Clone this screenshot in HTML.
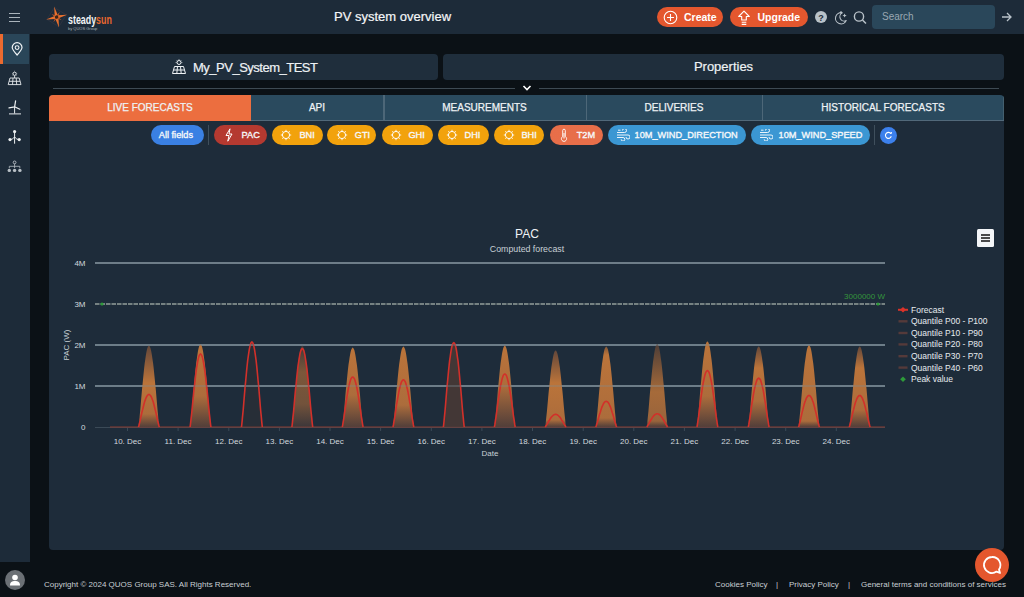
<!DOCTYPE html>
<html><head><meta charset="utf-8">
<style>
*{margin:0;padding:0;box-sizing:border-box}
html,body{width:1024px;height:597px;overflow:hidden;background:#0b1116;font-family:"Liberation Sans",sans-serif;color:#e9eef2}
.a{position:absolute}
#hdr{left:0;top:0;width:1024px;height:34px;background:#1d2b39}
#side{left:0;top:34px;width:30px;height:528px;background:#1d2b39}
#sideact{left:0;top:34px;width:29px;height:30px;background:#2a4659}
#sidebar-or{left:0;top:34px;width:3px;height:30px;background:#ec6a2f}
.panel{background:#1f2e3c;border-radius:4px;height:26px;top:54px;font-size:13px;line-height:26px;text-align:center;color:#eef2f5;-webkit-text-stroke:0.2px #eef2f5}
#sep{left:53px;top:88px;width:946px;height:1px;background:#3e4a53}
#chev{left:515px;top:83px;width:24px;height:10px;background:#0b1116}
#tabs{left:49px;top:95px;width:955px;height:26px;background:#2a4a5e;border-radius:4px 4px 0 0;overflow:hidden}
.tab{position:absolute;top:0;height:25px;line-height:25px;text-align:center;font-size:10px;color:#eef2f5;-webkit-text-stroke:0.25px #eef2f5}
.tdiv{position:absolute;top:0;width:1px;height:25px;background:#4d6778}
#tabline{position:absolute;left:0;top:25px;width:955px;height:1px;background:#52697a}
#content{left:49px;top:121px;width:955px;height:429px;background:#1e2c3a;border-radius:0 0 4px 4px}
.chip{position:absolute;top:125px;height:20px;border-radius:10px;font-size:9.2px;font-weight:normal;-webkit-text-stroke:0.35px #f6f8fa;line-height:20px;color:#f6f8fa;white-space:nowrap}
.chip span{position:absolute;top:0}
.btn{position:absolute;top:7px;height:20px;border-radius:10px;background:#e4572e;font-size:11px;line-height:20px;color:#fff}
.foot{position:absolute;top:579.5px;font-size:8px;color:#c9cfd4;white-space:nowrap}
.yl{position:absolute;font-size:8px;color:#d6dde2;text-align:right;width:30px}
.xl{position:absolute;top:436px;font-size:8px;color:#d6dde2;width:50px;text-align:center}
.lg{position:absolute;left:911px;font-size:8.5px;color:#e6ebef;white-space:nowrap;line-height:10px}
</style></head><body>
<div id="hdr" class="a"></div>
<!-- hamburger -->
<div class="a" style="left:9px;top:12.5px;width:11px;height:1px;background:#aab4bc"></div>
<div class="a" style="left:9px;top:16.5px;width:11px;height:1px;background:#aab4bc"></div>
<div class="a" style="left:9px;top:20.5px;width:11px;height:1px;background:#aab4bc"></div>
<!-- logo -->
<svg class="a" style="left:44px;top:4px" width="26" height="26" viewBox="0 0 26 26">
<g transform="translate(12.6 13.1) rotate(-13)">
<path d="M-7 -7 L7 -7 L7 7 L-7 7 Z" transform="rotate(45)" fill="none" stroke="#5a4a55" stroke-width="0.5" opacity="0.45"/>
<path d="M0 -10.8 L1.6 -1.6 L10.8 0 L1.6 1.6 L0 10.8 L-1.6 1.6 L-10.8 0 L-1.6 -1.6 Z" fill="#e8702e"/>
<path d="M0 -6 L0.9 -0.9 L6 0 L0.9 0.9 L0 6 L-0.9 0.9 L-6 0 L-0.9 -0.9 Z" transform="rotate(45)" fill="#c85a28"/>
<circle r="1.7" fill="#3a2418"/>
</g>
</svg>
<div class="a" style="left:67.5px;top:12.5px;font-size:12.5px;font-weight:bold;color:#f2f4f6;transform:scaleX(0.71);transform-origin:0 0;white-space:nowrap">steady<span style="color:#e8672e">sun</span></div>
<div class="a" style="left:68px;top:25.5px;font-size:4px;color:#a8b0b6;white-space:nowrap">by QUOS Group</div>
<div class="a" style="left:334px;top:9px;font-size:13px;color:#f4f6f8;width:118px;white-space:nowrap;-webkit-text-stroke:0.2px #f4f6f8">PV system overview</div>
<div class="btn" style="left:657px;width:66px"><svg class="a" style="left:6px;top:2.5px" width="15" height="15" viewBox="0 0 15 15"><circle cx="7.5" cy="7.5" r="6.3" fill="none" stroke="#fff" stroke-width="1.1"/><path d="M7.5 4V11M4 7.5H11" stroke="#fff" stroke-width="1.1"/></svg><span class="a" style="left:27px;font-weight:bold;font-size:10.5px">Create</span></div>
<div class="btn" style="left:730px;width:78px"><svg class="a" style="left:7px;top:2.5px" width="14" height="16" viewBox="0 0 14 16"><path d="M7 1.2 L12.3 6.5 L9.3 6.5 L9.3 10 L4.7 10 L4.7 6.5 L1.7 6.5 Z" fill="none" stroke="#fff" stroke-width="1.1" stroke-linejoin="round"/><path d="M4.7 12.2 H9.3 M4.7 14.4 H9.3" stroke="#fff" stroke-width="1.1"/></svg><span class="a" style="left:27.5px;font-weight:bold;font-size:10.5px">Upgrade</span></div>
<!-- help/moon/search -->
<svg class="a" style="left:813px;top:10px" width="56" height="16" viewBox="0 0 56 16">
<circle cx="8" cy="7" r="6" fill="#b9c2c9"/><text x="8" y="10.5" font-size="9" font-weight="bold" text-anchor="middle" fill="#1d2b39" font-family="Liberation Sans">?</text>
<path d="M29.3 2.8 A5.6 5.6 0 1 0 33.2 10.6 A4.3 4.3 0 0 1 29.3 2.8 Z" fill="none" stroke="#b9c2c9" stroke-width="1.1" stroke-linejoin="round"/><path d="M31.6 3.4 Q31.9 5.2 33.7 5.5 Q31.9 5.8 31.6 7.6 Q31.3 5.8 29.5 5.5 Q31.3 5.2 31.6 3.4 Z" fill="#b9c2c9"/><circle cx="28" cy="2.4" r="1.1" fill="#b9c2c9"/>
<circle cx="46" cy="6.5" r="4.6" fill="none" stroke="#b9c2c9" stroke-width="1.4"/><path d="M49.5 10 L53 13.5" stroke="#b9c2c9" stroke-width="1.5"/>
</svg>
<div class="a" style="left:872px;top:5px;width:123px;height:24px;background:#2a475a;border-radius:4px"></div>
<div class="a" style="left:882px;top:11px;font-size:10px;color:#9aa8b2">Search</div>
<svg class="a" style="left:1001px;top:12px" width="12" height="10" viewBox="0 0 12 10"><path d="M1 5 H10 M6 1 L10 5 L6 9" fill="none" stroke="#b9c2c9" stroke-width="1.3"/></svg>

<div id="side" class="a"></div>
<div id="sideact" class="a"></div>
<div id="sidebar-or" class="a"></div>
<!-- sidebar icons -->
<svg class="a" style="left:0;top:34px" width="30" height="150" viewBox="0 34 30 150">
<path d="M17.1 55 C13.6 51.2 12.2 49.6 12.2 47.6 A4.9 4.9 0 0 1 22 47.6 C22 49.6 20.6 51.2 17.1 55 Z" fill="none" stroke="#f2f5f7" stroke-width="1.2" stroke-linejoin="round"/>
<circle cx="17.1" cy="47.6" r="1.9" fill="none" stroke="#f2f5f7" stroke-width="1.1"/>
<circle cx="14.6" cy="73.8" r="1.6" fill="none" stroke="#e6eaed" stroke-width="0.9"/>
<path d="M14.6 70.8V71.5M12 73.8H12.6M16.6 73.8H17.2M12.8 72L13.3 72.5M16.4 72L15.9 72.5M12.8 75.6L13.3 75.1M16.4 75.6L15.9 75.1" stroke="#e6eaed" stroke-width="0.7"/>
<path d="M10 78 H19.2 L21 84.6 H8.2 Z M9.1 81.3 H20.1 M13 78 L12.5 84.6 M16.2 78 L16.7 84.6 M14.6 75.5V78" fill="none" stroke="#e6eaed" stroke-width="0.9" stroke-linejoin="round"/>
<path d="M14.6 106.8 V113.5 M9 113.9 H21" stroke="#e6eaed" stroke-width="1"/>
<path d="M14.6 106.8 L15.6 100.8 M14.6 106.8 L9 107.8 M14.6 106.8 L19.8 109.2" stroke="#eef1f3" stroke-width="1.2" stroke-linecap="round"/>
<path d="M14.6 131.6 V143.7 M14.6 137 C13.5 138.5 11.5 139.6 10 139.6 M14.6 137 C15.7 138.5 17.5 139.6 19 139.6" stroke="#eef1f3" stroke-width="1" fill="none"/>
<circle cx="14.6" cy="131.6" r="1.6" fill="#eef1f3"/><circle cx="10" cy="139.6" r="1.6" fill="#eef1f3"/><circle cx="19.2" cy="139.6" r="1.6" fill="#eef1f3"/>
<circle cx="14.6" cy="162.4" r="1.4" fill="none" stroke="#b9c0c6" stroke-width="0.9"/>
<path d="M14.6 163.8V168 M9.3 168.2V166.3 H19.8 V168.2" stroke="#b9c0c6" stroke-width="0.8" fill="none"/>
<circle cx="9.3" cy="170.4" r="1.7" fill="#b9c0c6"/><circle cx="14.6" cy="170.4" r="1.7" fill="#b9c0c6"/><circle cx="19.9" cy="170.4" r="1.7" fill="#b9c0c6"/>
</svg>
<!-- name panels -->
<div class="a panel" style="left:49px;width:389px"></div>
<svg class="a" style="left:171px;top:59px" width="16" height="16" viewBox="0 0 16 16"><circle cx="8" cy="3.5" r="2" fill="none" stroke="#eef2f5" stroke-width="1"/><path d="M8 0.3V1M4.7 3.5H5.5M10.5 3.5H11.3M5.6 1.2L6.1 1.7M10.4 1.2L9.9 1.7" stroke="#eef2f5" stroke-width="0.8"/><path d="M3.5 7.5 H12.5 L14.5 14.5 H1.5 Z M2.5 11 H13.5 M6.5 7.5 L5.8 14.5 M9.5 7.5 L10.2 14.5" fill="none" stroke="#eef2f5" stroke-width="1"/></svg>
<div class="a" style="left:193px;top:60px;font-size:13px;color:#eef2f5;white-space:nowrap;letter-spacing:-0.5px;-webkit-text-stroke:0.2px #eef2f5">My_PV_System_TEST</div>
<div class="a panel" style="left:443px;width:561px">Properties</div>
<div id="sep" class="a"></div>
<div id="chev" class="a"></div>
<svg class="a" style="left:522px;top:84px" width="10" height="8" viewBox="0 0 10 8"><path d="M1.5 2 L5 5.5 L8.5 2" fill="none" stroke="#fff" stroke-width="1.6"/></svg>

<div id="tabs" class="a">
<div class="tab" style="left:0;width:202px;background:#ec6e3f;height:26px">LIVE FORECASTS</div>
<div class="tab" style="left:202px;width:132px">API</div>
<div class="tab" style="left:334px;width:203px">MEASUREMENTS</div>
<div class="tab" style="left:537px;width:176px">DELIVERIES</div>
<div class="tab" style="left:713px;width:242px">HISTORICAL FORECASTS</div>
<div id="tabline" style="left:202px;width:753px"></div>
<div class="tdiv" style="left:334px;width:2px"></div>
<div class="tdiv" style="left:537px"></div>
<div class="tdiv" style="left:713px"></div>
<div class="tdiv" style="left:954px;background:#44606f"></div>
</div>
<div id="content" class="a"></div>

<div class="chip" style="left:151px;width:53px;background-color:#3a80e3"><span style="left:7.8px">All fields</span></div>
<div class="chip" style="left:214px;width:53px;background-color:#ad2a22;background-image:radial-gradient(rgba(255,200,180,0.2) 0.5px,transparent 0.9px);background-size:2px 2px"><svg class="a" style="left:10px;top:3px" width="10" height="14" viewBox="0 0 10 14"><path d="M6 0.8 L2 7.5 H5 L3.8 13.2 L8 6 H5 Z" fill="none" stroke="#fff" stroke-width="1"/></svg><span style="left:27.6px">PAC</span></div>
<div class="chip" style="left:272px;width:51px;background-color:#f2a20c"><svg class="a" style="left:8px;top:4px" width="12" height="12" viewBox="0 0 12 12"><circle cx="6" cy="6" r="3.6" fill="none" stroke="#fff" stroke-width="1"/><path d="M6 0.8V2.2M6 9.8V11.2M0.8 6H2.2M9.8 6H11.2M2.3 2.3L3.3 3.3M8.7 8.7L9.7 9.7M2.3 9.7L3.3 8.7M8.7 3.3L9.7 2.3" stroke="#fff" stroke-width="0.9"/></svg><span style="left:27.4px">BNI</span></div>
<div class="chip" style="left:327px;width:49px;background-color:#f2a20c"><svg class="a" style="left:9.3px;top:4px" width="12" height="12" viewBox="0 0 12 12"><circle cx="6" cy="6" r="3.6" fill="none" stroke="#fff" stroke-width="1"/><path d="M6 0.8V2.2M6 9.8V11.2M0.8 6H2.2M9.8 6H11.2M2.3 2.3L3.3 3.3M8.7 8.7L9.7 9.7M2.3 9.7L3.3 8.7M8.7 3.3L9.7 2.3" stroke="#fff" stroke-width="0.9"/></svg><span style="left:27.8px">GTI</span></div>
<div class="chip" style="left:382px;width:51px;background-color:#f2a20c"><svg class="a" style="left:8.2px;top:4px" width="12" height="12" viewBox="0 0 12 12"><circle cx="6" cy="6" r="3.6" fill="none" stroke="#fff" stroke-width="1"/><path d="M6 0.8V2.2M6 9.8V11.2M0.8 6H2.2M9.8 6H11.2M2.3 2.3L3.3 3.3M8.7 8.7L9.7 9.7M2.3 9.7L3.3 8.7M8.7 3.3L9.7 2.3" stroke="#fff" stroke-width="0.9"/></svg><span style="left:26.4px">GHI</span></div>
<div class="chip" style="left:438px;width:51px;background-color:#f2a20c"><svg class="a" style="left:8px;top:4px" width="12" height="12" viewBox="0 0 12 12"><circle cx="6" cy="6" r="3.6" fill="none" stroke="#fff" stroke-width="1"/><path d="M6 0.8V2.2M6 9.8V11.2M0.8 6H2.2M9.8 6H11.2M2.3 2.3L3.3 3.3M8.7 8.7L9.7 9.7M2.3 9.7L3.3 8.7M8.7 3.3L9.7 2.3" stroke="#fff" stroke-width="0.9"/></svg><span style="left:26.6px">DHI</span></div>
<div class="chip" style="left:494px;width:50px;background-color:#f2a20c"><svg class="a" style="left:8.6px;top:4px" width="12" height="12" viewBox="0 0 12 12"><circle cx="6" cy="6" r="3.6" fill="none" stroke="#fff" stroke-width="1"/><path d="M6 0.8V2.2M6 9.8V11.2M0.8 6H2.2M9.8 6H11.2M2.3 2.3L3.3 3.3M8.7 8.7L9.7 9.7M2.3 9.7L3.3 8.7M8.7 3.3L9.7 2.3" stroke="#fff" stroke-width="0.9"/></svg><span style="left:27.4px">BHI</span></div>
<div class="chip" style="left:550px;width:53px;background-color:#e6653e;background-image:radial-gradient(rgba(255,200,180,0.2) 0.5px,transparent 0.9px);background-size:2px 2px"><svg class="a" style="left:10.4px;top:3px" width="8" height="14" viewBox="0 0 8 14"><path d="M2.7 8.5V2.5A1.3 1.3 0 0 1 5.3 2.5V8.5A2.6 2.6 0 1 1 2.7 8.5Z" fill="none" stroke="#fff" stroke-width="0.9"/><path d="M4 5V10.5" stroke="#fff" stroke-width="1"/></svg><span style="left:26.7px">T2M</span></div>
<div class="chip" style="left:608px;width:138px;background-color:#3b97d3"><svg class="a" style="left:8px;top:4px" width="14" height="12" viewBox="0 0 14 12"><path d="M1 3.5H8.5A2 2 0 1 0 6.5 1.5 M1 6H12A2 2 0 1 1 10 8 M1 8.5H7A1.8 1.8 0 1 1 5.2 10.3 M2 1.2H4.5" fill="none" stroke="#fff" stroke-width="0.9"/></svg><span style="left:26.6px">10M_WIND_DIRECTION</span></div>
<div class="chip" style="left:751px;width:119px;background-color:#3b97d3"><svg class="a" style="left:8px;top:4px" width="14" height="12" viewBox="0 0 14 12"><path d="M1 3.5H8.5A2 2 0 1 0 6.5 1.5 M1 6H12A2 2 0 1 1 10 8 M1 8.5H7A1.8 1.8 0 1 1 5.2 10.3 M2 1.2H4.5" fill="none" stroke="#fff" stroke-width="0.9"/></svg><span style="left:27.6px">10M_WIND_SPEED</span></div>
<div class="a" style="left:208px;top:125px;width:1px;height:20px;background:#3f4f5c"></div>
<div class="a" style="left:874px;top:125px;width:1px;height:20px;background:#3f4f5c"></div>
<div class="a" style="left:880px;top:126.5px;width:17px;height:17px;border-radius:50%;background:#3c80ec"></div>
<svg class="a" style="left:880px;top:126.5px" width="17" height="17" viewBox="0 0 17 17"><path d="M10.9 6.6 A3 3 0 1 0 11.3 9.3" fill="none" stroke="#fff" stroke-width="1.1"/><path d="M9.8 5.4 L11.1 6.8 L11.6 5" fill="none" stroke="#fff" stroke-width="0.9"/></svg>
<svg class="a" style="left:0;top:0" width="1024" height="597" viewBox="0 0 1024 597">
<text x="527" y="238" font-size="12" fill="#eef2f5" text-anchor="middle" font-family="Liberation Sans">PAC</text>
<text x="527" y="252" font-size="8.8" fill="#c8d0d6" text-anchor="middle" font-family="Liberation Sans">Computed forecast</text>
<rect x="95" y="385.0" width="790" height="2" fill="#6e7d88"/>
<rect x="95" y="344.0" width="790" height="2" fill="#6e7d88"/>
<rect x="95" y="262.0" width="790" height="2" fill="#6e7d88"/>
<text x="85.5" y="430.0" font-size="8" fill="#d2d9de" text-anchor="end" font-family="Liberation Sans">0</text>
<text x="85.5" y="389.0" font-size="8" fill="#d2d9de" text-anchor="end" font-family="Liberation Sans">1M</text>
<text x="85.5" y="348.0" font-size="8" fill="#d2d9de" text-anchor="end" font-family="Liberation Sans">2M</text>
<text x="85.5" y="307.0" font-size="8" fill="#d2d9de" text-anchor="end" font-family="Liberation Sans">3M</text>
<text x="85.5" y="266.0" font-size="8" fill="#d2d9de" text-anchor="end" font-family="Liberation Sans">4M</text>
<text transform="translate(69 345) rotate(-90)" font-size="8" fill="#c8d0d6" text-anchor="middle" font-family="Liberation Sans">PAC (W)</text>
<rect x="95" y="427" width="790" height="1" fill="#3b4a57"/>
<rect x="127.0" y="427" width="1" height="4" fill="#3b4a57"/>
<text x="127.5" y="444" font-size="8" fill="#d2d9de" text-anchor="middle" font-family="Liberation Sans">10. Dec</text>
<rect x="177.6" y="427" width="1" height="4" fill="#3b4a57"/>
<text x="178.1" y="444" font-size="8" fill="#d2d9de" text-anchor="middle" font-family="Liberation Sans">11. Dec</text>
<rect x="228.3" y="427" width="1" height="4" fill="#3b4a57"/>
<text x="228.8" y="444" font-size="8" fill="#d2d9de" text-anchor="middle" font-family="Liberation Sans">12. Dec</text>
<rect x="278.9" y="427" width="1" height="4" fill="#3b4a57"/>
<text x="279.4" y="444" font-size="8" fill="#d2d9de" text-anchor="middle" font-family="Liberation Sans">13. Dec</text>
<rect x="329.5" y="427" width="1" height="4" fill="#3b4a57"/>
<text x="330.0" y="444" font-size="8" fill="#d2d9de" text-anchor="middle" font-family="Liberation Sans">14. Dec</text>
<rect x="380.1" y="427" width="1" height="4" fill="#3b4a57"/>
<text x="380.6" y="444" font-size="8" fill="#d2d9de" text-anchor="middle" font-family="Liberation Sans">15. Dec</text>
<rect x="430.8" y="427" width="1" height="4" fill="#3b4a57"/>
<text x="431.3" y="444" font-size="8" fill="#d2d9de" text-anchor="middle" font-family="Liberation Sans">16. Dec</text>
<rect x="481.4" y="427" width="1" height="4" fill="#3b4a57"/>
<text x="481.9" y="444" font-size="8" fill="#d2d9de" text-anchor="middle" font-family="Liberation Sans">17. Dec</text>
<rect x="532.0" y="427" width="1" height="4" fill="#3b4a57"/>
<text x="532.5" y="444" font-size="8" fill="#d2d9de" text-anchor="middle" font-family="Liberation Sans">18. Dec</text>
<rect x="582.7" y="427" width="1" height="4" fill="#3b4a57"/>
<text x="583.2" y="444" font-size="8" fill="#d2d9de" text-anchor="middle" font-family="Liberation Sans">19. Dec</text>
<rect x="633.3" y="427" width="1" height="4" fill="#3b4a57"/>
<text x="633.8" y="444" font-size="8" fill="#d2d9de" text-anchor="middle" font-family="Liberation Sans">20. Dec</text>
<rect x="683.9" y="427" width="1" height="4" fill="#3b4a57"/>
<text x="684.4" y="444" font-size="8" fill="#d2d9de" text-anchor="middle" font-family="Liberation Sans">21. Dec</text>
<rect x="734.6" y="427" width="1" height="4" fill="#3b4a57"/>
<text x="735.1" y="444" font-size="8" fill="#d2d9de" text-anchor="middle" font-family="Liberation Sans">22. Dec</text>
<rect x="785.2" y="427" width="1" height="4" fill="#3b4a57"/>
<text x="785.7" y="444" font-size="8" fill="#d2d9de" text-anchor="middle" font-family="Liberation Sans">23. Dec</text>
<rect x="835.8" y="427" width="1" height="4" fill="#3b4a57"/>
<text x="836.3" y="444" font-size="8" fill="#d2d9de" text-anchor="middle" font-family="Liberation Sans">24. Dec</text>
<text x="490" y="456" font-size="8" fill="#c8d0d6" text-anchor="middle" font-family="Liberation Sans">Date</text>
<line x1="95" y1="304" x2="885" y2="304" stroke="#949f9a" stroke-width="1.5" stroke-dasharray="4.5 1"/>
<circle cx="102" cy="304" r="1.6" fill="#2e9a3a"/><circle cx="878" cy="304" r="1.6" fill="#2e9a3a"/>
<text x="885" y="299" font-size="8" fill="#34953c" text-anchor="end" font-family="Liberation Sans">3000000 W</text>
<path d="M110 427 H885" stroke="#8a3a30" stroke-width="1.2" fill="none"/>
<defs>
<linearGradient id="g0" gradientUnits="userSpaceOnUse" x1="0" y1="345.6" x2="0" y2="427.0"><stop offset="0" stop-color="#6a4a3a"/><stop offset="0.459" stop-color="#c87a3a"/><stop offset="0.840" stop-color="#b8723c"/><stop offset="1" stop-color="#56403a"/></linearGradient>
<linearGradient id="g1" gradientUnits="userSpaceOnUse" x1="0" y1="344.4" x2="0" y2="427.0"><stop offset="0" stop-color="#c87a3a"/><stop offset="0.056" stop-color="#c87a3a"/><stop offset="0.625" stop-color="#b8723c"/><stop offset="1" stop-color="#56403a"/></linearGradient>
<linearGradient id="g3" gradientUnits="userSpaceOnUse" x1="0" y1="345.6" x2="0" y2="427.0"><stop offset="0" stop-color="#5a4538"/><stop offset="0.324" stop-color="#c87a3a"/><stop offset="0.717" stop-color="#b8723c"/><stop offset="1" stop-color="#56403a"/></linearGradient>
<linearGradient id="g4" gradientUnits="userSpaceOnUse" x1="0" y1="347.6" x2="0" y2="427.0"><stop offset="0" stop-color="#c87a3a"/><stop offset="0.018" stop-color="#c87a3a"/><stop offset="0.597" stop-color="#b8723c"/><stop offset="1" stop-color="#56403a"/></linearGradient>
<linearGradient id="g5" gradientUnits="userSpaceOnUse" x1="0" y1="346.6" x2="0" y2="427.0"><stop offset="0" stop-color="#c87a3a"/><stop offset="0.017" stop-color="#c87a3a"/><stop offset="0.726" stop-color="#b8723c"/><stop offset="1" stop-color="#56403a"/></linearGradient>
<linearGradient id="g7" gradientUnits="userSpaceOnUse" x1="0" y1="345.6" x2="0" y2="427.0"><stop offset="0" stop-color="#c87a3a"/><stop offset="0.017" stop-color="#c87a3a"/><stop offset="0.496" stop-color="#b8723c"/><stop offset="1" stop-color="#56403a"/></linearGradient>
<linearGradient id="g8" gradientUnits="userSpaceOnUse" x1="0" y1="350.5" x2="0" y2="427.0"><stop offset="0" stop-color="#6a4a3a"/><stop offset="0.425" stop-color="#c87a3a"/><stop offset="0.908" stop-color="#b8723c"/><stop offset="1" stop-color="#56403a"/></linearGradient>
<linearGradient id="g9" gradientUnits="userSpaceOnUse" x1="0" y1="346.6" x2="0" y2="427.0"><stop offset="0" stop-color="#8a5a38"/><stop offset="0.104" stop-color="#c87a3a"/><stop offset="0.888" stop-color="#b8723c"/><stop offset="1" stop-color="#56403a"/></linearGradient>
<linearGradient id="g10" gradientUnits="userSpaceOnUse" x1="0" y1="344.0" x2="0" y2="427.0"><stop offset="0" stop-color="#5a4236"/><stop offset="0.578" stop-color="#c87a3a"/><stop offset="0.928" stop-color="#b8723c"/><stop offset="1" stop-color="#56403a"/></linearGradient>
<linearGradient id="g11" gradientUnits="userSpaceOnUse" x1="0" y1="341.4" x2="0" y2="427.0"><stop offset="0" stop-color="#c87a3a"/><stop offset="0.042" stop-color="#c87a3a"/><stop offset="0.638" stop-color="#b8723c"/><stop offset="1" stop-color="#56403a"/></linearGradient>
<linearGradient id="g12" gradientUnits="userSpaceOnUse" x1="0" y1="346.5" x2="0" y2="427.0"><stop offset="0" stop-color="#6a4a3a"/><stop offset="0.267" stop-color="#c87a3a"/><stop offset="0.677" stop-color="#b8723c"/><stop offset="1" stop-color="#56403a"/></linearGradient>
<linearGradient id="g13" gradientUnits="userSpaceOnUse" x1="0" y1="345.2" x2="0" y2="427.0"><stop offset="0" stop-color="#c87a3a"/><stop offset="0.034" stop-color="#c87a3a"/><stop offset="0.927" stop-color="#b8723c"/><stop offset="1" stop-color="#56403a"/></linearGradient>
<linearGradient id="g14" gradientUnits="userSpaceOnUse" x1="0" y1="346.5" x2="0" y2="427.0"><stop offset="0" stop-color="#6a4a3a"/><stop offset="0.267" stop-color="#c87a3a"/><stop offset="0.789" stop-color="#b8723c"/><stop offset="1" stop-color="#56403a"/></linearGradient>
</defs>
<path d="M138.5 427.0 L139.0 422.6 L139.5 417.4 L140.1 411.7 L140.6 405.9 L141.1 400.0 L141.6 394.2 L142.1 388.4 L142.7 382.8 L143.2 377.4 L143.7 372.4 L144.2 367.6 L144.7 363.2 L145.3 359.2 L145.8 355.7 L146.3 352.7 L146.8 350.2 L147.3 348.2 L147.9 346.8 L148.4 345.9 L148.9 345.6 L149.4 345.9 L149.9 346.8 L150.5 348.2 L151.0 350.2 L151.5 352.7 L152.0 355.7 L152.5 359.2 L153.1 363.2 L153.6 367.6 L154.1 372.4 L154.6 377.4 L155.1 382.8 L155.7 388.4 L156.2 394.2 L156.7 400.0 L157.2 405.9 L157.7 411.7 L158.3 417.4 L158.8 422.6 L159.3 427.0 Z" fill="url(#g0)" fill-opacity="0.92"/>
<path d="M138.5 427.0 L139.0 425.3 L139.5 423.2 L140.1 420.9 L140.6 418.6 L141.1 416.2 L141.6 413.9 L142.1 411.6 L142.7 409.4 L143.2 407.2 L143.7 405.2 L144.2 403.3 L144.7 401.5 L145.3 399.9 L145.8 398.5 L146.3 397.3 L146.8 396.3 L147.3 395.5 L147.9 395.0 L148.4 394.6 L148.9 394.5 L149.4 394.6 L149.9 395.0 L150.5 395.5 L151.0 396.3 L151.5 397.3 L152.0 398.5 L152.5 399.9 L153.1 401.5 L153.6 403.3 L154.1 405.2 L154.6 407.2 L155.1 409.4 L155.7 411.6 L156.2 413.9 L156.7 416.2 L157.2 418.6 L157.7 420.9 L158.3 423.2 L158.8 425.3 L159.3 427.0" stroke="#d2302a" stroke-width="1.6" fill="none"/>
<path d="M190.1 427.0 L190.6 422.6 L191.1 417.2 L191.7 411.5 L192.2 405.6 L192.7 399.6 L193.2 393.7 L193.7 387.8 L194.3 382.2 L194.8 376.7 L195.3 371.6 L195.8 366.7 L196.3 362.3 L196.9 358.2 L197.4 354.7 L197.9 351.6 L198.4 349.0 L198.9 347.0 L199.5 345.6 L200.0 344.7 L200.5 344.4 L201.0 344.7 L201.5 345.6 L202.1 347.0 L202.6 349.0 L203.1 351.6 L203.6 354.7 L204.1 358.2 L204.7 362.3 L205.2 366.7 L205.7 371.6 L206.2 376.7 L206.7 382.2 L207.3 387.8 L207.8 393.7 L208.3 399.6 L208.8 405.6 L209.3 411.5 L209.9 417.2 L210.4 422.6 L210.9 427.0 Z" fill="url(#g1)" fill-opacity="0.92"/>
<path d="M190.1 427.0 L190.6 423.1 L191.1 418.4 L191.7 413.3 L192.2 408.1 L192.7 402.8 L193.2 397.6 L193.7 392.4 L194.3 387.4 L194.8 382.6 L195.3 378.0 L195.8 373.7 L196.3 369.8 L196.9 366.2 L197.4 363.1 L197.9 360.4 L198.4 358.1 L198.9 356.3 L199.5 355.0 L200.0 354.3 L200.5 354.0 L201.0 354.3 L201.5 355.0 L202.1 356.3 L202.6 358.1 L203.1 360.4 L203.6 363.1 L204.1 366.2 L204.7 369.8 L205.2 373.7 L205.7 378.0 L206.2 382.6 L206.7 387.4 L207.3 392.4 L207.8 397.6 L208.3 402.8 L208.8 408.1 L209.3 413.3 L209.9 418.4 L210.4 423.1 L210.9 427.0" stroke="#d2302a" stroke-width="1.6" fill="none"/>
<path d="M241.5 427.0 L242.0 422.4 L242.5 416.9 L243.1 411.0 L243.6 405.0 L244.1 398.8 L244.6 392.7 L245.1 386.7 L245.7 380.9 L246.2 375.3 L246.7 369.9 L247.2 365.0 L247.7 360.4 L248.3 356.2 L248.8 352.6 L249.3 349.4 L249.8 346.8 L250.3 344.7 L250.9 343.2 L251.4 342.3 L251.9 342.0 L252.4 342.3 L252.9 343.2 L253.5 344.7 L254.0 346.8 L254.5 349.4 L255.0 352.6 L255.5 356.2 L256.1 360.4 L256.6 365.0 L257.1 369.9 L257.6 375.3 L258.1 380.9 L258.7 386.7 L259.2 392.7 L259.7 398.8 L260.2 405.0 L260.7 411.0 L261.3 416.9 L261.8 422.4 L262.3 427.0 Z" fill="#3a3434" fill-opacity="0.35"/>
<path d="M241.5 427.0 L242.0 422.4 L242.5 416.9 L243.1 411.0 L243.6 405.0 L244.1 398.8 L244.6 392.7 L245.1 386.7 L245.7 380.9 L246.2 375.3 L246.7 369.9 L247.2 365.0 L247.7 360.4 L248.3 356.2 L248.8 352.6 L249.3 349.4 L249.8 346.8 L250.3 344.7 L250.9 343.2 L251.4 342.3 L251.9 342.0 L252.4 342.3 L252.9 343.2 L253.5 344.7 L254.0 346.8 L254.5 349.4 L255.0 352.6 L255.5 356.2 L256.1 360.4 L256.6 365.0 L257.1 369.9 L257.6 375.3 L258.1 380.9 L258.7 386.7 L259.2 392.7 L259.7 398.8 L260.2 405.0 L260.7 411.0 L261.3 416.9 L261.8 422.4 L262.3 427.0" stroke="#d2302a" stroke-width="1.6" fill="none"/>
<path d="M291.9 427.0 L292.4 422.6 L292.9 417.4 L293.5 411.7 L294.0 405.9 L294.5 400.0 L295.0 394.2 L295.5 388.4 L296.1 382.8 L296.6 377.4 L297.1 372.4 L297.6 367.6 L298.1 363.2 L298.7 359.2 L299.2 355.7 L299.7 352.7 L300.2 350.2 L300.7 348.2 L301.3 346.8 L301.8 345.9 L302.3 345.6 L302.8 345.9 L303.3 346.8 L303.9 348.2 L304.4 350.2 L304.9 352.7 L305.4 355.7 L305.9 359.2 L306.5 363.2 L307.0 367.6 L307.5 372.4 L308.0 377.4 L308.5 382.8 L309.1 388.4 L309.6 394.2 L310.1 400.0 L310.6 405.9 L311.1 411.7 L311.7 417.4 L312.2 422.6 L312.7 427.0 Z" fill="url(#g3)" fill-opacity="0.55"/>
<path d="M291.9 427.0 L292.4 422.8 L292.9 417.7 L293.5 412.3 L294.0 406.7 L294.5 401.0 L295.0 395.3 L295.5 389.8 L296.1 384.4 L296.6 379.2 L297.1 374.3 L297.6 369.7 L298.1 365.5 L298.7 361.6 L299.2 358.3 L299.7 355.3 L300.2 352.9 L300.7 351.0 L301.3 349.6 L301.8 348.8 L302.3 348.5 L302.8 348.8 L303.3 349.6 L303.9 351.0 L304.4 352.9 L304.9 355.3 L305.4 358.3 L305.9 361.6 L306.5 365.5 L307.0 369.7 L307.5 374.3 L308.0 379.2 L308.5 384.4 L309.1 389.8 L309.6 395.3 L310.1 401.0 L310.6 406.7 L311.1 412.3 L311.7 417.7 L312.2 422.8 L312.7 427.0" stroke="#d2302a" stroke-width="1.6" fill="none"/>
<path d="M342.3 427.0 L342.8 422.7 L343.3 417.6 L343.9 412.1 L344.4 406.4 L344.9 400.7 L345.4 395.0 L345.9 389.4 L346.5 383.9 L347.0 378.7 L347.5 373.7 L348.0 369.1 L348.5 364.8 L349.1 360.9 L349.6 357.5 L350.1 354.5 L350.6 352.1 L351.1 350.1 L351.7 348.7 L352.2 347.9 L352.7 347.6 L353.2 347.9 L353.7 348.7 L354.3 350.1 L354.8 352.1 L355.3 354.5 L355.8 357.5 L356.3 360.9 L356.9 364.8 L357.4 369.1 L357.9 373.7 L358.4 378.7 L358.9 383.9 L359.5 389.4 L360.0 395.0 L360.5 400.7 L361.0 406.4 L361.5 412.1 L362.1 417.6 L362.6 422.7 L363.1 427.0 Z" fill="url(#g4)" fill-opacity="0.92"/>
<path d="M342.3 427.0 L342.8 424.3 L343.3 421.1 L343.9 417.6 L344.4 414.0 L344.9 410.4 L345.4 406.8 L345.9 403.3 L346.5 399.9 L347.0 396.6 L347.5 393.4 L348.0 390.5 L348.5 387.8 L349.1 385.4 L349.6 383.2 L350.1 381.4 L350.6 379.8 L351.1 378.6 L351.7 377.7 L352.2 377.2 L352.7 377.0 L353.2 377.2 L353.7 377.7 L354.3 378.6 L354.8 379.8 L355.3 381.4 L355.8 383.2 L356.3 385.4 L356.9 387.8 L357.4 390.5 L357.9 393.4 L358.4 396.6 L358.9 399.9 L359.5 403.3 L360.0 406.8 L360.5 410.4 L361.0 414.0 L361.5 417.6 L362.1 421.1 L362.6 424.3 L363.1 427.0" stroke="#d2302a" stroke-width="1.6" fill="none"/>
<path d="M393.0 427.0 L393.5 422.7 L394.0 417.5 L394.6 411.9 L395.1 406.2 L395.6 400.4 L396.1 394.6 L396.6 388.9 L397.2 383.4 L397.7 378.1 L398.2 373.0 L398.7 368.3 L399.2 364.0 L399.8 360.1 L400.3 356.6 L400.8 353.6 L401.3 351.1 L401.8 349.1 L402.4 347.7 L402.9 346.9 L403.4 346.6 L403.9 346.9 L404.4 347.7 L405.0 349.1 L405.5 351.1 L406.0 353.6 L406.5 356.6 L407.0 360.1 L407.6 364.0 L408.1 368.3 L408.6 373.0 L409.1 378.1 L409.6 383.4 L410.2 388.9 L410.7 394.6 L411.2 400.4 L411.7 406.2 L412.2 411.9 L412.8 417.5 L413.3 422.7 L413.8 427.0 Z" fill="url(#g5)" fill-opacity="0.92"/>
<path d="M393.0 427.0 L393.5 424.5 L394.0 421.4 L394.6 418.1 L395.1 414.8 L395.6 411.4 L396.1 408.0 L396.6 404.6 L397.2 401.4 L397.7 398.3 L398.2 395.3 L398.7 392.6 L399.2 390.0 L399.8 387.7 L400.3 385.7 L400.8 383.9 L401.3 382.4 L401.8 381.3 L402.4 380.5 L402.9 380.0 L403.4 379.8 L403.9 380.0 L404.4 380.5 L405.0 381.3 L405.5 382.4 L406.0 383.9 L406.5 385.7 L407.0 387.7 L407.6 390.0 L408.1 392.6 L408.6 395.3 L409.1 398.3 L409.6 401.4 L410.2 404.6 L410.7 408.0 L411.2 411.4 L411.7 414.8 L412.2 418.1 L412.8 421.4 L413.3 424.5 L413.8 427.0" stroke="#d2302a" stroke-width="1.6" fill="none"/>
<path d="M443.4 427.0 L443.9 422.5 L444.4 417.0 L445.0 411.2 L445.5 405.2 L446.0 399.1 L446.5 393.0 L447.0 387.0 L447.6 381.2 L448.1 375.7 L448.6 370.4 L449.1 365.5 L449.6 360.9 L450.2 356.8 L450.7 353.2 L451.2 350.0 L451.7 347.4 L452.2 345.4 L452.8 343.9 L453.3 343.0 L453.8 342.7 L454.3 343.0 L454.8 343.9 L455.4 345.4 L455.9 347.4 L456.4 350.0 L456.9 353.2 L457.4 356.8 L458.0 360.9 L458.5 365.5 L459.0 370.4 L459.5 375.7 L460.0 381.2 L460.6 387.0 L461.1 393.0 L461.6 399.1 L462.1 405.2 L462.6 411.2 L463.2 417.0 L463.7 422.5 L464.2 427.0 Z" fill="#4a3a36" fill-opacity="0.85"/>
<path d="M443.4 427.0 L443.9 422.5 L444.4 417.0 L445.0 411.2 L445.5 405.2 L446.0 399.1 L446.5 393.0 L447.0 387.0 L447.6 381.2 L448.1 375.7 L448.6 370.4 L449.1 365.5 L449.6 360.9 L450.2 356.8 L450.7 353.2 L451.2 350.0 L451.7 347.4 L452.2 345.4 L452.8 343.9 L453.3 343.0 L453.8 342.7 L454.3 343.0 L454.8 343.9 L455.4 345.4 L455.9 347.4 L456.4 350.0 L456.9 353.2 L457.4 356.8 L458.0 360.9 L458.5 365.5 L459.0 370.4 L459.5 375.7 L460.0 381.2 L460.6 387.0 L461.1 393.0 L461.6 399.1 L462.1 405.2 L462.6 411.2 L463.2 417.0 L463.7 422.5 L464.2 427.0" stroke="#d2302a" stroke-width="1.6" fill="none"/>
<path d="M494.4 427.0 L494.9 422.6 L495.4 417.4 L496.0 411.7 L496.5 405.9 L497.0 400.0 L497.5 394.2 L498.0 388.4 L498.6 382.8 L499.1 377.4 L499.6 372.4 L500.1 367.6 L500.6 363.2 L501.2 359.2 L501.7 355.7 L502.2 352.7 L502.7 350.2 L503.2 348.2 L503.8 346.8 L504.3 345.9 L504.8 345.6 L505.3 345.9 L505.8 346.8 L506.4 348.2 L506.9 350.2 L507.4 352.7 L507.9 355.7 L508.4 359.2 L509.0 363.2 L509.5 367.6 L510.0 372.4 L510.5 377.4 L511.0 382.8 L511.6 388.4 L512.1 394.2 L512.6 400.0 L513.1 405.9 L513.6 411.7 L514.2 417.4 L514.7 422.6 L515.2 427.0 Z" fill="url(#g7)" fill-opacity="0.92"/>
<path d="M494.4 427.0 L494.9 424.2 L495.4 420.7 L496.0 417.1 L496.5 413.3 L497.0 409.4 L497.5 405.6 L498.0 401.9 L498.6 398.2 L499.1 394.7 L499.6 391.4 L500.1 388.3 L500.6 385.5 L501.2 382.9 L501.7 380.6 L502.2 378.6 L502.7 377.0 L503.2 375.7 L503.8 374.7 L504.3 374.2 L504.8 374.0 L505.3 374.2 L505.8 374.7 L506.4 375.7 L506.9 377.0 L507.4 378.6 L507.9 380.6 L508.4 382.9 L509.0 385.5 L509.5 388.3 L510.0 391.4 L510.5 394.7 L511.0 398.2 L511.6 401.9 L512.1 405.6 L512.6 409.4 L513.1 413.3 L513.6 417.1 L514.2 420.7 L514.7 424.2 L515.2 427.0" stroke="#d2302a" stroke-width="1.6" fill="none"/>
<path d="M545.2 427.0 L545.7 422.9 L546.2 417.9 L546.8 412.6 L547.3 407.2 L547.8 401.7 L548.3 396.1 L548.8 390.7 L549.4 385.5 L549.9 380.4 L550.4 375.6 L550.9 371.2 L551.4 367.0 L552.0 363.3 L552.5 360.0 L553.0 357.2 L553.5 354.8 L554.0 352.9 L554.6 351.6 L555.1 350.8 L555.6 350.5 L556.1 350.8 L556.6 351.6 L557.2 352.9 L557.7 354.8 L558.2 357.2 L558.7 360.0 L559.2 363.3 L559.8 367.0 L560.3 371.2 L560.8 375.6 L561.3 380.4 L561.8 385.5 L562.4 390.7 L562.9 396.1 L563.4 401.7 L563.9 407.2 L564.4 412.6 L565.0 417.9 L565.5 422.9 L566.0 427.0 Z" fill="url(#g8)" fill-opacity="0.92"/>
<path d="M545.2 427.0 L545.7 426.3 L546.2 425.5 L546.8 424.6 L547.3 423.7 L547.8 422.8 L548.3 421.9 L548.8 421.0 L549.4 420.2 L549.9 419.3 L550.4 418.5 L550.9 417.8 L551.4 417.1 L552.0 416.5 L552.5 416.0 L553.0 415.5 L553.5 415.1 L554.0 414.8 L554.6 414.6 L555.1 414.4 L555.6 414.4 L556.1 414.4 L556.6 414.6 L557.2 414.8 L557.7 415.1 L558.2 415.5 L558.7 416.0 L559.2 416.5 L559.8 417.1 L560.3 417.8 L560.8 418.5 L561.3 419.3 L561.8 420.2 L562.4 421.0 L562.9 421.9 L563.4 422.8 L563.9 423.7 L564.4 424.6 L565.0 425.5 L565.5 426.3 L566.0 427.0" stroke="#d2302a" stroke-width="1.6" fill="none"/>
<path d="M595.8 427.0 L596.3 422.7 L596.8 417.5 L597.4 411.9 L597.9 406.2 L598.4 400.4 L598.9 394.6 L599.4 388.9 L600.0 383.4 L600.5 378.1 L601.0 373.0 L601.5 368.3 L602.0 364.0 L602.6 360.1 L603.1 356.6 L603.6 353.6 L604.1 351.1 L604.6 349.1 L605.2 347.7 L605.7 346.9 L606.2 346.6 L606.7 346.9 L607.2 347.7 L607.8 349.1 L608.3 351.1 L608.8 353.6 L609.3 356.6 L609.8 360.1 L610.4 364.0 L610.9 368.3 L611.4 373.0 L611.9 378.1 L612.4 383.4 L613.0 388.9 L613.5 394.6 L614.0 400.4 L614.5 406.2 L615.0 411.9 L615.6 417.5 L616.1 422.7 L616.6 427.0 Z" fill="url(#g9)" fill-opacity="0.92"/>
<path d="M595.8 427.0 L596.3 425.6 L596.8 424.0 L597.4 422.2 L597.9 420.3 L598.4 418.5 L598.9 416.6 L599.4 414.8 L600.0 413.1 L600.5 411.4 L601.0 409.7 L601.5 408.2 L602.0 406.9 L602.6 405.6 L603.1 404.5 L603.6 403.5 L604.1 402.7 L604.6 402.1 L605.2 401.7 L605.7 401.4 L606.2 401.3 L606.7 401.4 L607.2 401.7 L607.8 402.1 L608.3 402.7 L608.8 403.5 L609.3 404.5 L609.8 405.6 L610.4 406.9 L610.9 408.2 L611.4 409.7 L611.9 411.4 L612.4 413.1 L613.0 414.8 L613.5 416.6 L614.0 418.5 L614.5 420.3 L615.0 422.2 L615.6 424.0 L616.1 425.6 L616.6 427.0" stroke="#d2302a" stroke-width="1.6" fill="none"/>
<path d="M646.8 427.0 L647.3 422.6 L647.8 417.2 L648.4 411.4 L648.9 405.5 L649.4 399.5 L649.9 393.5 L650.4 387.7 L651.0 382.0 L651.5 376.5 L652.0 371.3 L652.5 366.4 L653.0 362.0 L653.6 357.9 L654.1 354.3 L654.6 351.2 L655.1 348.7 L655.6 346.6 L656.2 345.2 L656.7 344.3 L657.2 344.0 L657.7 344.3 L658.2 345.2 L658.8 346.6 L659.3 348.7 L659.8 351.2 L660.3 354.3 L660.8 357.9 L661.4 362.0 L661.9 366.4 L662.4 371.3 L662.9 376.5 L663.4 382.0 L664.0 387.7 L664.5 393.5 L665.0 399.5 L665.5 405.5 L666.0 411.4 L666.6 417.2 L667.1 422.6 L667.6 427.0 Z" fill="url(#g10)" fill-opacity="0.8"/>
<path d="M646.8 427.0 L647.3 426.3 L647.8 425.4 L648.4 424.5 L648.9 423.6 L649.4 422.6 L649.9 421.7 L650.4 420.7 L651.0 419.8 L651.5 419.0 L652.0 418.1 L652.5 417.4 L653.0 416.7 L653.6 416.0 L654.1 415.4 L654.6 414.9 L655.1 414.5 L655.6 414.2 L656.2 414.0 L656.7 413.8 L657.2 413.8 L657.7 413.8 L658.2 414.0 L658.8 414.2 L659.3 414.5 L659.8 414.9 L660.3 415.4 L660.8 416.0 L661.4 416.7 L661.9 417.4 L662.4 418.1 L662.9 419.0 L663.4 419.8 L664.0 420.7 L664.5 421.7 L665.0 422.6 L665.5 423.6 L666.0 424.5 L666.6 425.4 L667.1 426.3 L667.6 427.0" stroke="#d2302a" stroke-width="1.6" fill="none"/>
<path d="M697.0 427.0 L697.5 422.4 L698.0 416.9 L698.6 410.9 L699.1 404.8 L699.6 398.6 L700.1 392.5 L700.6 386.4 L701.2 380.5 L701.7 374.9 L702.2 369.5 L702.7 364.5 L703.2 359.9 L703.8 355.7 L704.3 352.0 L704.8 348.8 L705.3 346.2 L705.8 344.1 L706.4 342.6 L706.9 341.7 L707.4 341.4 L707.9 341.7 L708.4 342.6 L709.0 344.1 L709.5 346.2 L710.0 348.8 L710.5 352.0 L711.0 355.7 L711.6 359.9 L712.1 364.5 L712.6 369.5 L713.1 374.9 L713.6 380.5 L714.2 386.4 L714.7 392.5 L715.2 398.6 L715.7 404.8 L716.2 410.9 L716.8 416.9 L717.3 422.4 L717.8 427.0 Z" fill="url(#g11)" fill-opacity="0.92"/>
<path d="M697.0 427.0 L697.5 424.0 L698.0 420.3 L698.6 416.4 L699.1 412.4 L699.6 408.3 L700.1 404.3 L700.6 400.3 L701.2 396.4 L701.7 392.7 L702.2 389.1 L702.7 385.8 L703.2 382.8 L703.8 380.0 L704.3 377.6 L704.8 375.5 L705.3 373.8 L705.8 372.4 L706.4 371.4 L706.9 370.8 L707.4 370.6 L707.9 370.8 L708.4 371.4 L709.0 372.4 L709.5 373.8 L710.0 375.5 L710.5 377.6 L711.0 380.0 L711.6 382.8 L712.1 385.8 L712.6 389.1 L713.1 392.7 L713.6 396.4 L714.2 400.3 L714.7 404.3 L715.2 408.3 L715.7 412.4 L716.2 416.4 L716.8 420.3 L717.3 424.0 L717.8 427.0" stroke="#d2302a" stroke-width="1.6" fill="none"/>
<path d="M748.3 427.0 L748.8 422.7 L749.3 417.5 L749.9 411.9 L750.4 406.1 L750.9 400.3 L751.4 394.5 L751.9 388.8 L752.5 383.3 L753.0 378.0 L753.5 373.0 L754.0 368.3 L754.5 363.9 L755.1 360.0 L755.6 356.5 L756.1 353.5 L756.6 351.0 L757.1 349.1 L757.7 347.6 L758.2 346.8 L758.7 346.5 L759.2 346.8 L759.7 347.6 L760.3 349.1 L760.8 351.0 L761.3 353.5 L761.8 356.5 L762.3 360.0 L762.9 363.9 L763.4 368.3 L763.9 373.0 L764.4 378.0 L764.9 383.3 L765.5 388.8 L766.0 394.5 L766.5 400.3 L767.0 406.1 L767.5 411.9 L768.1 417.5 L768.6 422.7 L769.1 427.0 Z" fill="url(#g12)" fill-opacity="0.92"/>
<path d="M748.3 427.0 L748.8 424.4 L749.3 421.2 L749.9 417.8 L750.4 414.4 L750.9 410.8 L751.4 407.3 L751.9 403.9 L752.5 400.5 L753.0 397.3 L753.5 394.2 L754.0 391.4 L754.5 388.8 L755.1 386.4 L755.6 384.3 L756.1 382.4 L756.6 380.9 L757.1 379.7 L757.7 378.9 L758.2 378.4 L758.7 378.2 L759.2 378.4 L759.7 378.9 L760.3 379.7 L760.8 380.9 L761.3 382.4 L761.8 384.3 L762.3 386.4 L762.9 388.8 L763.4 391.4 L763.9 394.2 L764.4 397.3 L764.9 400.5 L765.5 403.9 L766.0 407.3 L766.5 410.8 L767.0 414.4 L767.5 417.8 L768.1 421.2 L768.6 424.4 L769.1 427.0" stroke="#d2302a" stroke-width="1.6" fill="none"/>
<path d="M798.6 427.0 L799.1 422.6 L799.6 417.3 L800.2 411.6 L800.7 405.8 L801.2 399.9 L801.7 394.0 L802.2 388.2 L802.8 382.6 L803.3 377.2 L803.8 372.1 L804.3 367.3 L804.8 362.9 L805.4 358.9 L805.9 355.4 L806.4 352.3 L806.9 349.8 L807.4 347.8 L808.0 346.4 L808.5 345.5 L809.0 345.2 L809.5 345.5 L810.0 346.4 L810.6 347.8 L811.1 349.8 L811.6 352.3 L812.1 355.4 L812.6 358.9 L813.2 362.9 L813.7 367.3 L814.2 372.1 L814.7 377.2 L815.2 382.6 L815.8 388.2 L816.3 394.0 L816.8 399.9 L817.3 405.8 L817.8 411.6 L818.4 417.3 L818.9 422.6 L819.4 427.0 Z" fill="url(#g13)" fill-opacity="0.92"/>
<path d="M798.6 427.0 L799.1 425.3 L799.6 423.3 L800.2 421.1 L800.7 418.8 L801.2 416.6 L801.7 414.3 L802.2 412.1 L802.8 409.9 L803.3 407.8 L803.8 405.9 L804.3 404.0 L804.8 402.3 L805.4 400.8 L805.9 399.4 L806.4 398.2 L806.9 397.3 L807.4 396.5 L808.0 395.9 L808.5 395.6 L809.0 395.5 L809.5 395.6 L810.0 395.9 L810.6 396.5 L811.1 397.3 L811.6 398.2 L812.1 399.4 L812.6 400.8 L813.2 402.3 L813.7 404.0 L814.2 405.9 L814.7 407.8 L815.2 409.9 L815.8 412.1 L816.3 414.3 L816.8 416.6 L817.3 418.8 L817.8 421.1 L818.4 423.3 L818.9 425.3 L819.4 427.0" stroke="#d2302a" stroke-width="1.6" fill="none"/>
<path d="M849.3 427.0 L849.8 422.7 L850.3 417.5 L850.9 411.9 L851.4 406.1 L851.9 400.3 L852.4 394.5 L852.9 388.8 L853.5 383.3 L854.0 378.0 L854.5 373.0 L855.0 368.3 L855.5 363.9 L856.1 360.0 L856.6 356.5 L857.1 353.5 L857.6 351.0 L858.1 349.1 L858.7 347.6 L859.2 346.8 L859.7 346.5 L860.2 346.8 L860.7 347.6 L861.3 349.1 L861.8 351.0 L862.3 353.5 L862.8 356.5 L863.3 360.0 L863.9 363.9 L864.4 368.3 L864.9 373.0 L865.4 378.0 L865.9 383.3 L866.5 388.8 L867.0 394.5 L867.5 400.3 L868.0 406.1 L868.5 411.9 L869.1 417.5 L869.6 422.7 L870.1 427.0 Z" fill="url(#g14)" fill-opacity="0.92"/>
<path d="M849.3 427.0 L849.8 425.3 L850.3 423.3 L850.9 421.1 L851.4 418.8 L851.9 416.6 L852.4 414.3 L852.9 412.1 L853.5 409.9 L854.0 407.8 L854.5 405.9 L855.0 404.0 L855.5 402.3 L856.1 400.8 L856.6 399.4 L857.1 398.2 L857.6 397.3 L858.1 396.5 L858.7 395.9 L859.2 395.6 L859.7 395.5 L860.2 395.6 L860.7 395.9 L861.3 396.5 L861.8 397.3 L862.3 398.2 L862.8 399.4 L863.3 400.8 L863.9 402.3 L864.4 404.0 L864.9 405.9 L865.4 407.8 L865.9 409.9 L866.5 412.1 L867.0 414.3 L867.5 416.6 L868.0 418.8 L868.5 421.1 L869.1 423.3 L869.6 425.3 L870.1 427.0" stroke="#d2302a" stroke-width="1.6" fill="none"/>
<rect x="95" y="385.0" width="790" height="2" fill="#6e7d88" fill-opacity="0.3"/>
<rect x="95" y="344.0" width="790" height="2" fill="#6e7d88" fill-opacity="0.3"/>
</svg>
<div class="lg" style="top:304.8px">Forecast</div>
<div class="lg" style="top:316.3px">Quantile P00 - P100</div>
<div class="lg" style="top:328.0px">Quantile P10 - P90</div>
<div class="lg" style="top:339.4px">Quantile P20 - P80</div>
<div class="lg" style="top:351.2px">Quantile P30 - P70</div>
<div class="lg" style="top:362.6px">Quantile P40 - P60</div>
<div class="lg" style="top:374.3px">Peak value</div>
<svg class="a" style="left:895px;top:300px" width="16" height="90" viewBox="895 300 16 90">
<path d="M898 309.8 H908" stroke="#d9332a" stroke-width="2"/><path d="M903 307 L906 309.8 L903 312.6 L900 309.8 Z" fill="#d9332a"/>
<rect x="898.5" y="320.1" width="9" height="2.4" fill="#553a3a"/>
<rect x="898.5" y="331.8" width="9" height="2.4" fill="#553a3a"/>
<rect x="898.5" y="343.2" width="9" height="2.4" fill="#553a3a"/>
<rect x="898.5" y="355.0" width="9" height="2.4" fill="#553a3a"/>
<rect x="898.5" y="366.40000000000003" width="9" height="2.4" fill="#553a3a"/>
<path d="M903 376.5 L905.8 379.3 L903 382.1 L900.2 379.3 Z" fill="#2e9a3a"/>
</svg>
<div class="a" style="left:976.6px;top:229px;width:17.5px;height:17.5px;background:#f4f6f8;border-radius:1.5px"></div><div class="a" style="left:980.5px;top:234px;width:9.5px;height:1.6px;background:#4a4a4a"></div><div class="a" style="left:980.5px;top:237.2px;width:9.5px;height:1.6px;background:#4a4a4a"></div><div class="a" style="left:980.5px;top:240.4px;width:9.5px;height:1.6px;background:#4a4a4a"></div>

<!-- footer -->
<div class="a" style="left:5px;top:570px;width:20px;height:20px;border-radius:50%;background:#6b7075"></div>
<svg class="a" style="left:5px;top:570px" width="20" height="20" viewBox="0 0 20 20"><circle cx="10" cy="7.5" r="2.8" fill="#fff"/><path d="M5 15.5 C5 12 7 11 10 11 C13 11 15 12 15 15.5 Z" fill="#fff"/></svg>
<div class="foot" style="left:44px">Copyright © 2024 QUOS Group SAS. All Rights Reserved.</div>
<div class="foot" style="left:715px">Cookies Policy</div>
<div class="foot" style="left:776px">|</div>
<div class="foot" style="left:789px">Privacy Policy</div>
<div class="foot" style="left:848px">|</div>
<div class="foot" style="left:861px">General terms and conditions of services</div>
<div class="a" style="left:975px;top:548px;width:34px;height:34px;border-radius:50%;background:#e4572e"></div>
<svg class="a" style="left:975px;top:548px" width="34" height="34" viewBox="0 0 34 34"><path d="M17 9 A8 8 0 1 0 21.5 23.6 L25 25 L24 21.5 A8 8 0 0 0 17 9 Z" fill="none" stroke="#fff" stroke-width="1.8" stroke-linejoin="round"/></svg>
</body></html>
